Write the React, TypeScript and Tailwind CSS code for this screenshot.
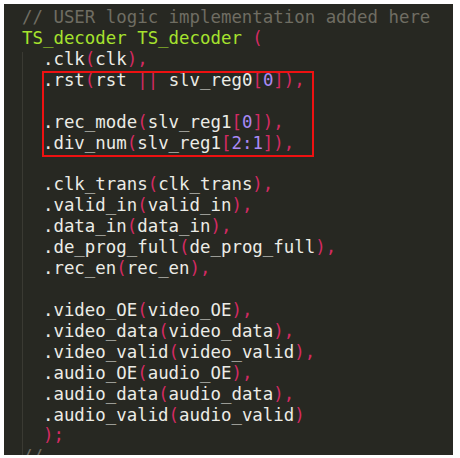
import React from "react";

type Tok = [string, string];

const W = "text-[#ecece6]";
const P = "text-[#d42a62]";
const N = "text-[#a98af5]";
const G = "text-[#a6e22e]";
const C = "text-[#6f6d62]";

const port = (name: string, arg: string, comma = true): Tok[] => [
  ["  ." + name, W],
  ["(", P],
  [arg, W],
  [comma ? ")," : ")", P],
];

const lines: Tok[][] = [
  [["// USER logic implementation added here", C]],
  [
    ["TS_decoder TS_decoder ", G],
    ["(", P],
  ],
  port("clk", "clk"),
  [
    ["  .rst", W],
    ["(", P],
    ["rst ", W],
    ["||", P],
    [" slv_reg0", W],
    ["[", P],
    ["0", N],
    ["]),", P],
  ],
  [],
  [
    ["  .rec_mode", W],
    ["(", P],
    ["slv_reg1", W],
    ["[", P],
    ["0", N],
    ["]),", P],
  ],
  [
    ["  .div_num", W],
    ["(", P],
    ["slv_reg1", W],
    ["[", P],
    ["2:1", N],
    ["]),", P],
  ],
  [],
  port("clk_trans", "clk_trans"),
  port("valid_in", "valid_in"),
  port("data_in", "data_in"),
  port("de_prog_full", "de_prog_full"),
  port("rec_en", "rec_en"),
  [],
  port("video_OE", "video_OE"),
  port("video_data", "video_data"),
  port("video_valid", "video_valid"),
  port("audio_OE", "audio_OE"),
  port("audio_data", "audio_data"),
  port("audio_valid", "audio_valid", false),
  [["  );", P]],
  [["//", C]],
];

export default function App() {
  return (
    <div className="w-[460px] h-[458px] bg-white p-[4px] pr-[7px] pb-[3px]">
      <div className="relative w-full h-full bg-[#272822] overflow-hidden pl-[18px] pt-[3px] font-['DejaVu_Sans_Mono',monospace] text-[17.4px] leading-[20.93px]">
        {/* indent guide */}
        <div className="absolute left-[18px] top-[48px] bottom-0 w-px bg-[#3a3a33]" />
        {lines.map((line, i) => (
          <div key={i} className="whitespace-pre h-[20.93px]">
            {line.map(([t, c], j) => (
              <span key={j} className={c}>
                {t}
              </span>
            ))}
          </div>
        ))}
        {/* highlight box */}
        <div className="absolute left-[38px] top-[67px] w-[272px] h-[86px] border-2 border-[#ee1111]" />
      </div>
    </div>
  );
}
